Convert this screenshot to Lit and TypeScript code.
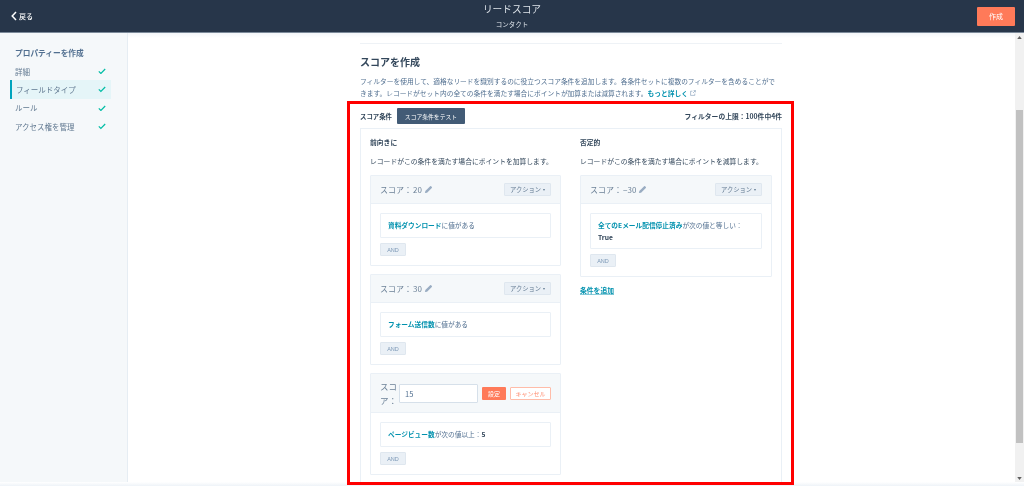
import { LitElement, html, css } from "lit";
import { customElement } from "lit/decorators.js";

const pencil = html`<svg class="pencil" viewBox="0 0 10 10"><path d="M1 9l.5-2.4L6.8 1.3a.8.8 0 0 1 1.1 0l.8.8a.8.8 0 0 1 0 1.1L3.4 8.5z" fill="#99acc2"/></svg>`;
const check = html`<svg class="check" viewBox="0 0 10 8"><path d="M1 4.2l2.6 2.6L9 1.2" fill="none" stroke="#00bda5" stroke-width="1.5"/></svg>`;

@customElement("app-root")
export class AppRoot extends LitElement {
  static styles = css`
    :host { display: block; width: 1024px; height: 486px; overflow: hidden; position: relative; background: #fff;
      font-family: "Noto Sans CJK JP", "Noto Sans", sans-serif; color: #33475b; filter: blur(0.3px); }
    * { box-sizing: border-box; }
    .top { height: 33px; background: #27364a; border-bottom: 1px solid #7c8a9a; display: grid; grid-template-columns: 1fr auto 1fr; align-items: center; padding: 0 9px 0 11px; color: #fff; }
    .back { display: flex; align-items: center; gap: 2px; font-size: 7px; font-weight: 500; }
    .back svg { width: 6px; height: 10px; }
    .title { text-align: center; font-size: 9.7px; line-height: 13px; color: #dfe5eb; margin-left: -2px; }
    .title small { display: block; font-size: 6.5px; line-height: 10px; margin-top: 3px; }
    .create { justify-self: end; width: 38px; height: 19px; background: #ff7a59; border-radius: 1px; font-size: 7px; display: flex; align-items: center; justify-content: center; color: #fff; }
    .body { display: flex; height: 449px; }
    .side { width: 128px; background: #f5f8fa; border-right: 1px solid #e6edf3; padding: 14px 16px 0 10px; flex: none; }
    .side h3 { margin: 0 0 3px 5px; font-size: 7.7px; line-height: 12px; font-weight: 700; color: #516f90; height: 12px; }
    .nav { display: flex; align-items: center; justify-content: space-between; height: 18.4px; padding: 0 5px; font-size: 7.5px; color: #607890; }
    .nav.on { background: #e5f5f8; border-left: 2px solid #00a4bd; padding-left: 4px; }
    .check { width: 8px; height: 6.5px; }
    .main { flex: 1; padding: 10px 233px 0 232px; background: linear-gradient(#f3f6f9 0, #fff 5px); overflow: hidden; }
    .rule { height: 1px; background: #eef2f6; margin-bottom: 11px; }
    h2 { margin: 0 0 7px; font-size: 10px; line-height: 14px; font-weight: 700; color: #33475b; }
    .desc { margin: 0 0 9px; padding-right: 4px; font-size: 6.73px; line-height: 11.5px; color: #516f90; }
    a { color: #0091ae; font-weight: 700; }
    .desc a { text-decoration: none; }
    .ext { width: 6px; height: 6px; margin-left: 2px; vertical-align: -0.5px; }
    .bar { display: flex; align-items: center; height: 16px; margin-bottom: 4px; }
    .bar b { font-size: 6.4px; font-weight: 700; }
    .bar b.limit { font-size: 6.8px; margin-left: auto; }
    .test { margin-left: 5px; width: 68px; height: 16px; background: #425b76; color: #fff; font-size: 5.8px; display: flex; align-items: center; justify-content: center; border-radius: 1px; }
    .outer { border: 1px solid #eaf0f6; padding: 8px 9px 0; display: grid; grid-template-columns: 191px 192px; column-gap: 19px; height: 360px; }
    h4 { margin: 0; font-size: 6.8px; line-height: 11px; font-weight: 700; }
    .lead { margin: 8px 0 8px; font-size: 6.8px; line-height: 11px; color: #33475b; }
    .card { border: 1px solid #eaf0f6; margin-bottom: 8px; border-radius: 1px; }
    .hd { height: 28px; background: #f5f8fa; border-bottom: 1px solid #eaf0f6; display: flex; align-items: center; padding: 0 9px; font-size: 8px; color: #6d8298; }
    .hd .num { margin-left: 1px; }
    .pencil { width: 9px; height: 9px; margin-left: 2px; }
    .act { margin-left: auto; width: 47px; height: 13px; background: #eaf0f6; border: 1px solid #dfe7ef; border-radius: 1px; font-size: 6.3px; color: #607890; display: flex; align-items: center; justify-content: center; gap: 2px; }
    .act i { border: 1.6px solid transparent; border-top: 2px solid #607890; border-bottom: 0; }
    .bd { padding: 9px; }
    .cond { border: 1px solid #eaf0f6; border-radius: 1px; padding: 0 7px 1px; height: 25px; display: flex; align-items: center; font-size: 6.7px; color: #516f90; white-space: pre; }
    .cond.tall { display: block; height: 36px; padding-top: 5px; line-height: 12px; }
    .cond a { text-decoration: none; }
    .cond b { color: #33475b; font-weight: 700; }
    .and { margin-top: 5px; width: 26px; height: 13px; background: #eaf0f6; border: 1px solid #dfe7ef; border-radius: 1px; font-family: "Liberation Sans", sans-serif; font-size: 5.5px; color: #7c98b6; display: flex; align-items: center; justify-content: center; }
    .hd.edit { height: 39px; }
    .lab { width: 19px; font-size: 8.5px; line-height: 14px; color: #6d8298; }
    .inp { width: 79px; height: 19px; border: 1px solid #d6e0ea; background: #fff; border-radius: 1px; margin-right: 4px; padding-left: 5px; font-size: 7.5px; display: flex; align-items: center; color: #516f90; }
    .set { width: 24px; height: 13px; background: #ff7a59; color: #fff; font-size: 6px; border-radius: 1px; display: flex; align-items: center; justify-content: center; margin-right: 4px; }
    .cancel { width: 41px; height: 13px; border: 1px solid #ffbca9; color: #ff8f73; background: #fff; font-size: 6px; border-radius: 1px; display: flex; align-items: center; justify-content: center; }
    .add { display: block; margin-top: 8px; font-size: 6.8px; line-height: 11px; text-decoration: underline; text-decoration-color: #8cccd9; }
    .sb { width: 9px; flex: none; background: #f1f1f1; display: flex; flex-direction: column; align-items: center; }
    .arrow { height: 8px; flex: none; display: flex; align-items: center; justify-content: center; }
    .arrow svg { width: 5px; height: 3px; }
    .thumb { margin-top: 69px; width: 7px; height: 333px; background: #c1c1c1; flex: none; }
    .sb .grow { flex: 1; }
    .foot { height: 4px; background: linear-gradient(#fff, #eef3f8); }
    .mark { position: absolute; left: 347px; top: 101px; width: 447px; height: 384px; border: 3.5px solid #ff0000; pointer-events: none; }
  `;

  card(score: string, cond: unknown) {
    return html`<div class="card">
      <div class="hd">スコア：<span class="num">${score}</span>${pencil}<span class="act">アクション<i></i></span></div>
      <div class="bd">${cond}<div class="and">AND</div></div>
    </div>`;
  }

  render() {
    return html`
      <div class="top">
        <div class="back"><svg viewBox="0 0 6 10"><path d="M5 1L1.2 5 5 9" fill="none" stroke="#fff" stroke-width="1.5"/></svg>戻る</div>
        <div class="title">リードスコア<small>コンタクト</small></div>
        <div class="create">作成</div>
      </div>
      <div class="body">
        <aside class="side">
          <h3>プロパティーを作成</h3>
          <div class="nav">詳細${check}</div>
          <div class="nav on">フィールドタイプ${check}</div>
          <div class="nav">ルール${check}</div>
          <div class="nav">アクセス権を管理${check}</div>
        </aside>
        <main class="main">
          <div class="rule"></div>
          <h2>スコアを作成</h2>
          <p class="desc">フィルターを使用して、適格なリードを識別するのに役立つスコア条件を追加します。各条件セットに複数のフィルターを含めることができます。レコードがセット内の全ての条件を満たす場合にポイントが加算または減算されます。<a>もっと詳しく</a><svg class="ext" viewBox="0 0 10 10"><path d="M4 2H1v7h7V6M5 5l4-4M6 1h3v3" fill="none" stroke="#7c98b6" stroke-width="1"/></svg></p>
          <div class="bar"><b>スコア条件</b><span class="test">スコア条件をテスト</span><b class="limit">フィルターの上限：100件中4件</b></div>
          <div class="outer">
            <section>
              <h4>前向きに</h4>
              <p class="lead">レコードがこの条件を満たす場合にポイントを加算します。</p>
              ${this.card("20", html`<div class="cond"><a>資料ダウンロード</a>に値がある</div>`)}
              ${this.card("30", html`<div class="cond"><a>フォーム送信数</a>に値がある</div>`)}
              <div class="card">
                <div class="hd edit"><span class="lab">スコア：</span><span class="inp">15</span><span class="set">設定</span><span class="cancel">キャンセル</span></div>
                <div class="bd"><div class="cond"><a>ページビュー数</a>が次の値以上：<b>5</b></div><div class="and">AND</div></div>
              </div>
            </section>
            <section>
              <h4>否定的</h4>
              <p class="lead">レコードがこの条件を満たす場合にポイントを減算します。</p>
              ${this.card("−30", html`<div class="cond tall"><a>全てのEメール配信停止済み</a>が次の値と等しい：<br><b>True</b></div>`)}
              <a class="add">条件を追加</a>
            </section>
          </div>
        </main>
        <div class="sb">
          <div class="arrow"><svg viewBox="0 0 6 4"><path d="M3 0l3 4H0z" fill="#606060"/></svg></div>
          <div class="thumb"></div>
          <div class="grow"></div>
          <div class="arrow"><svg viewBox="0 0 6 4"><path d="M3 4L0 0h6z" fill="#606060"/></svg></div>
        </div>
      </div>
      <div class="foot"></div>
      <div class="mark"></div>
    `;
  }
}
